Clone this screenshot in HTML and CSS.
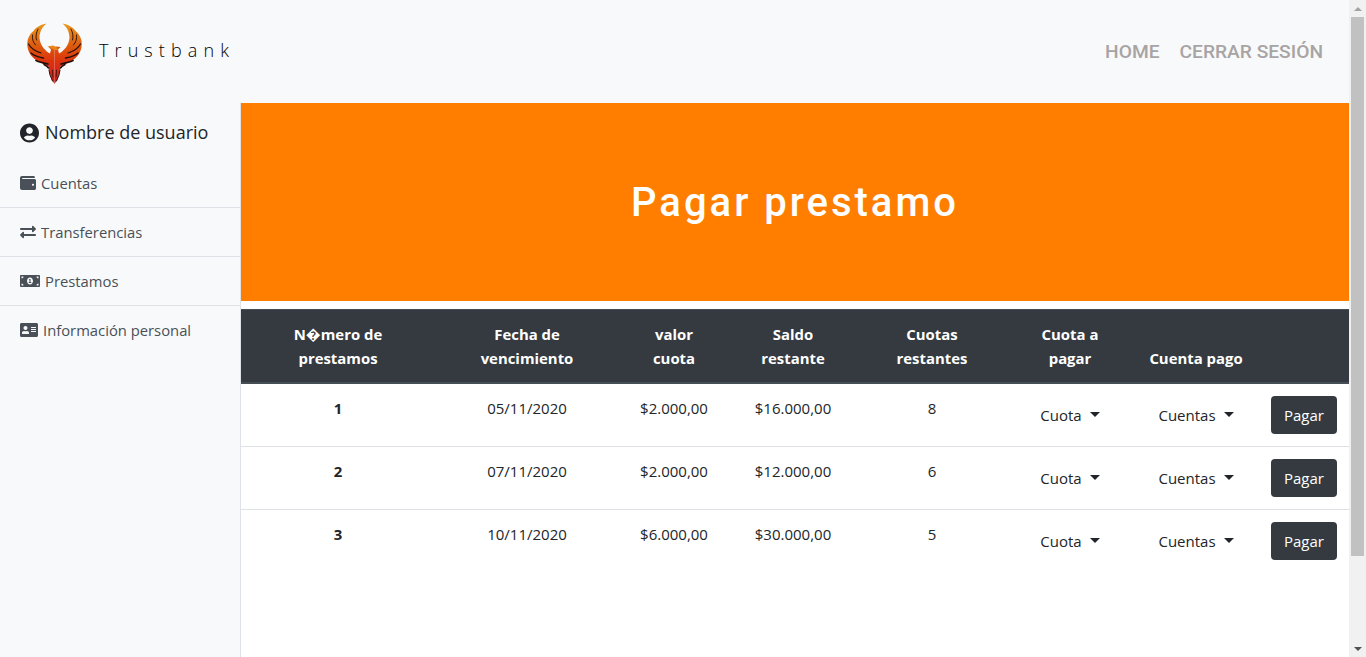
FILE: index.html
```html
<!DOCTYPE html>
<html lang="es">
<head>
<meta charset="utf-8">
<title>Trustbank</title>
<link rel="stylesheet" href="styles.css">
</head>
<body>
<div class="window">
  <div class="app">
    <header class="topbar">
      <a class="brand">
        <svg class="logo" viewBox="25 22 60 64" width="60" height="64" aria-hidden="true">
          <defs>
            <linearGradient id="fire" x1="0" y1="23" x2="0" y2="84" gradientUnits="userSpaceOnUse">
              <stop offset="0" stop-color="#ea9a20"/>
              <stop offset="0.35" stop-color="#de5f10"/>
              <stop offset="0.62" stop-color="#dc3410"/>
              <stop offset="1" stop-color="#d41818"/>
            </linearGradient>
            <filter id="soft" x="-10%" y="-10%" width="120%" height="120%"><feGaussianBlur stdDeviation="0.45"/></filter>
            <g id="half">
              <path fill="url(#fire)" d="M46.500 23.500C41 24.500 36 27 33.500 31C28.500 35 26.500 41 27.500 47C28.500 53 32 58 38 61C42 63.500 46 64.500 48.500 66.500L50 74L52 80L54.500 84L54.500 48L53 46.500L48.500 47L51 49.500L50 53.500C45 51 40 45 39.500 38C39.500 32 42 27 46.500 23.500Z"/>
              <g fill="none" stroke="#241008" stroke-linecap="round">
                <path stroke-width="0.900" d="M38 29C36 33 35.500 37 36.500 40"/>
                <path stroke-width="0.900" d="M32.500 35C32 39 33 42 35.500 45"/>
                <path stroke-width="1.200" d="M28.500 44C30.500 48 35 51 41 53"/>
                <path stroke-width="1.400" d="M31 53C34 56 38 57 43.500 58"/>
                <path stroke-width="1.700" d="M36 60.500C39 62 43 63 48 64"/>
                <path stroke-width="1.500" d="M44 64.500C46 65.500 47.500 66.500 48.500 68"/>
                <path stroke-width="1" d="M49 70L50 75L52.500 81"/>
                <path stroke-width="0.700" d="M52.400 70L52.900 77"/>
              </g>
            </g>
          </defs>
          <g filter="url(#soft)">
            <use href="#half"/>
            <use href="#half" transform="translate(109 0) scale(-1 1)"/>
            <path fill="#e8861a" d="M47.500 46.500L53 45.500L56.500 47L58 50L54.500 50Z"/>
          </g>
        </svg>
        <span class="brand-name">Trustbank</span>
      </a>
      <nav class="topnav">
        <a>HOME</a>
        <a>CERRAR SESIÓN</a>
      </nav>
    </header>
    <div class="layout">
      <aside class="sidebar">
        <div class="user">
          <svg class="user-icon" viewBox="0 0 496 512" aria-hidden="true"><path d="M248 8C111 8 0 119 0 256s111 248 248 248 248-111 248-248S385 8 248 8zm0 96c48.600 0 88 39.400 88 88s-39.400 88-88 88-88-39.400-88-88 39.400-88 88-88zm0 344c-58.700 0-111.300-26.600-146.500-68.200 18.800-35.400 55.600-59.800 98.500-59.800 2.400 0 4.800.4 7.100 1.100 13 4.200 26.600 6.900 40.900 6.900 14.300 0 28-2.700 40.900-6.900 2.300-.7 4.700-1.100 7.100-1.100 42.900 0 79.700 24.400 98.500 59.800C359.300 421.400 306.700 448 248 448z"/></svg>
          <span>Nombre de usuario</span>
        </div>
        <ul class="menu">
          <li>
            <svg class="icon w16" viewBox="0 0 512 512" aria-hidden="true"><path d="M461.200 128H80c-8.840 0-16-7.160-16-16s7.160-16 16-16h384c8.840 0 16-7.160 16-16 0-26.510-21.490-48-48-48H64C28.650 32 0 60.650 0 96v320c0 35.350 28.650 64 64 64h397.200c28.020 0 50.800-21.530 50.800-48V176c0-26.470-22.780-48-50.800-48zM416 340c-17.670 0-32-14.330-32-32s14.330-32 32-32 32 14.330 32 32-14.330 32-32 32z"/></svg>
            <span>Cuentas</span>
          </li>
          <li>
            <svg class="icon w16" viewBox="0 0 512 512" aria-hidden="true"><path d="M0 168v-16c0-13.255 10.745-24 24-24h360V80c0-21.367 25.899-32.042 40.971-16.971l80 80c9.372 9.373 9.372 24.569 0 33.941l-80 80C409.956 271.982 384 261.456 384 240v-48H24c-13.255 0-24-10.745-24-24zm488 152H128v-48c0-21.314-25.862-32.080-40.971-16.971l-80 80c-9.372 9.373-9.372 24.569 0 33.941l80 80C102.057 463.997 128 453.437 128 432v-48h360c13.255 0 24-10.745 24-24v-16c0-13.255-10.745-24-24-24z"/></svg>
            <span>Transferencias</span>
          </li>
          <li>
            <svg class="icon w20" viewBox="0 0 640 512" aria-hidden="true"><path d="M352 288h-16v-88c0-4.420-3.580-8-8-8h-13.580c-4.740 0-9.370 1.400-13.310 4.030l-15.330 10.220a7.994 7.994 0 0 0-2.220 11.090l8.880 13.310a7.994 7.994 0 0 0 11.090 2.220l.47-.31V288h-16c-4.420 0-8 3.580-8 8v16c0 4.420 3.580 8 8 8h64c4.420 0 8-3.580 8-8v-16c0-4.420-3.580-8-8-8zM608 64H32C14.330 64 0 78.330 0 96v320c0 17.670 14.330 32 32 32h576c17.670 0 32-14.330 32-32V96c0-17.670-14.330-32-32-32zM48 400v-64c35.350 0 64 28.650 64 64H48zm0-224v-64h64c0 35.350-28.650 64-64 64zm272 192c-53.020 0-96-50.150-96-112 0-61.860 42.980-112 96-112s96 50.140 96 112c0 61.870-43 112-96 112zm272 32h-64c0-35.350 28.650-64 64-64v64zm0-224c-35.350 0-64-28.650-64-64h64v64z"/></svg>
            <span>Prestamos</span>
          </li>
          <li>
            <svg class="icon w18" viewBox="0 0 576 512" aria-hidden="true"><path d="M528 32H48C21.500 32 0 53.500 0 80v352c0 26.500 21.500 48 48 48h480c26.500 0 48-21.500 48-48V80c0-26.500-21.500-48-48-48zm-352 96c35.300 0 64 28.700 64 64s-28.700 64-64 64-64-28.700-64-64 28.700-64 64-64zm112 236.800c0 10.600-10 19.200-22.400 19.200H86.400C74 384 64 375.400 64 364.800v-19.200c0-31.800 30.100-57.600 67.200-57.600h5c12.300 5.100 25.700 8 39.800 8s27.600-2.900 39.800-8h5c37.100 0 67.200 25.800 67.200 57.600v19.200zM512 312c0 4.400-3.600 8-8 8H360c-4.400 0-8-3.600-8-8v-16c0-4.400 3.600-8 8-8h144c4.400 0 8 3.600 8 8v16zm0-64c0 4.400-3.600 8-8 8H360c-4.400 0-8-3.600-8-8v-16c0-4.400 3.600-8 8-8h144c4.400 0 8 3.600 8 8v16zm0-64c0 4.400-3.600 8-8 8H360c-4.400 0-8-3.600-8-8v-16c0-4.400 3.600-8 8-8h144c4.400 0 8 3.600 8 8v16z"/></svg>
            <span>Información personal</span>
          </li>
        </ul>
      </aside>
      <main class="content">
        <section class="banner"><h1>Pagar prestamo</h1></section>
        <table class="loans">
          <colgroup>
            <col class="c1"><col class="c2"><col class="c3"><col class="c4"><col class="c5"><col class="c6"><col class="c7"><col class="c8">
          </colgroup>
          <thead>
            <tr>
              <th>N�mero de<br>prestamos</th>
              <th>Fecha de<br>vencimiento</th>
              <th>valor<br>cuota</th>
              <th>Saldo<br>restante</th>
              <th>Cuotas<br>restantes</th>
              <th>Cuota a<br>pagar</th>
              <th>Cuenta pago</th>
              <th></th>
            </tr>
          </thead>
          <tbody>
            <tr>
              <th>1</th><td>05/11/2020</td><td>$2.000,00</td><td>$16.000,00</td><td>8</td>
              <td><button class="drop">Cuota</button></td>
              <td><button class="drop">Cuentas</button></td>
              <td><button class="pay">Pagar</button></td>
            </tr>
            <tr>
              <th>2</th><td>07/11/2020</td><td>$2.000,00</td><td>$12.000,00</td><td>6</td>
              <td><button class="drop">Cuota</button></td>
              <td><button class="drop">Cuentas</button></td>
              <td><button class="pay">Pagar</button></td>
            </tr>
            <tr>
              <th>3</th><td>10/11/2020</td><td>$6.000,00</td><td>$30.000,00</td><td>5</td>
              <td><button class="drop">Cuota</button></td>
              <td><button class="drop">Cuentas</button></td>
              <td><button class="pay">Pagar</button></td>
            </tr>
          </tbody>
        </table>
      </main>
    </div>
  </div>
  <div class="scrollbar" aria-hidden="true">
    <div class="arrow up"></div>
    <div class="thumb"></div>
    <div class="arrow down"></div>
  </div>
</div>
</body>
</html>
```

FILE: styles.css
```css
* { box-sizing: border-box; }
html, body { margin: 0; height: 100%; overflow: hidden; }
body {
  font-family: "Open Sans", "Noto Sans", sans-serif;
  font-size: 15px;
  line-height: 24px;
  color: #212529;
  background: #fff;
}
.window { display: flex; height: 657px; }
.app { flex: 1; min-width: 0; display: flex; flex-direction: column; }

.topbar {
  height: 103px;
  flex: none;
  display: flex;
  align-items: center;
  justify-content: space-between;
  background: #f8f9fa;
  padding: 0 26px 0 25px;
}
.brand { display: flex; align-items: center; }
.logo { display: block; margin-top: 5px; }
.brand-name {
  margin-left: 14px;
  margin-bottom: 4px;
  font-weight: 300;
  font-size: 18px;
  letter-spacing: 6.1px;
  color: #000;
}
.topnav {
  display: flex;
  gap: 20px;
  font-family: Roboto, sans-serif;
  font-weight: 500;
  font-size: 19.2px;
  color: #a8a4a4;
}

.layout { flex: 1; display: flex; min-height: 0; }
.sidebar {
  width: 241px;
  flex: none;
  background: #f8f9fa;
  border-right: 1px solid #dee2e6;
}
.user {
  height: 56px;
  padding: 17px 0 0 20px;
  display: flex;
  align-items: flex-start;
  font-size: 18px;
  color: #212529;
}
.user-icon { width: 19px; height: 20px; margin: 3px 6px 0 0; fill: #212529; }
.menu { list-style: none; margin: 0; padding: 0; }
.menu li {
  height: 49px;
  display: flex;
  align-items: center;
  padding: 0 0 0 20px;
  border-bottom: 1px solid #dee2e6;
  color: #495057;
  font-size: 14.8px;
}
.menu li:last-child { border-bottom-color: transparent; }
.icon { height: 16px; fill: #495057; flex: none; margin-right: 5px; }
.w16 { width: 16px; }
.w18 { width: 18px; }
.w20 { width: 20px; }

.content { flex: 1; min-width: 0; background: #fff; }
.banner {
  height: 198px;
  margin-bottom: 8px;
  background: #ff7e00;
  display: flex;
  align-items: center;
  justify-content: center;
}
.banner h1 {
  margin: 2px 0 0;
  font-family: Roboto, sans-serif;
  font-weight: 500;
  font-size: 40px;
  line-height: 48px;
  letter-spacing: 3px;
  color: #fff;
}

.loans {
  width: 100%;
  table-layout: fixed;
  border-collapse: collapse;
  text-align: center;
}
.c1 { width: 194px; }
.c2 { width: 184px; }
.c3 { width: 110px; }
.c4 { width: 128px; }
.c5 { width: 150px; }
.c6 { width: 126px; }
.c7 { width: 126px; }
.c8 { width: 90px; }
.loans th, .loans td {
  padding: 12px;
  vertical-align: top;
  border-top: 1px solid #dee2e6;
}
.loans thead th {
  vertical-align: bottom;
  background: #343a40;
  color: #fff;
  border-top-color: #454d55;
  border-bottom: 2px solid #454d55;
  font-size: 14.9px;
  font-weight: 700;
}
.loans tbody tr:first-child th, .loans tbody tr:first-child td { border-top: 0; }
.loans tbody th { font-size: 14.9px; font-weight: 700; }

button { font: inherit; }
.drop {
  height: 38px;
  padding: 0;
  border: 0;
  background: transparent;
  color: #212529;
  display: inline-flex;
  align-items: center;
}
.drop::after {
  content: "";
  margin-left: 8px;
  margin-top: -2px;
  border-top: 5px solid #212529;
  border-left: 5px solid transparent;
  border-right: 5px solid transparent;
}
.pay {
  width: 66px;
  height: 38px;
  padding: 0;
  border: 0;
  border-radius: 4px;
  background: #343a40;
  color: #fff;
}

.scrollbar {
  width: 17px;
  flex: none;
  background: #f1f1f1;
  display: flex;
  flex-direction: column;
  align-items: center;
}
.arrow { height: 17px; flex: none; width: 13px; display: flex; align-items: center; justify-content: center; }
.arrow::before { content: ""; border-left: 4px solid transparent; border-right: 4px solid transparent; }
.up::before { border-bottom: 4px solid #a3a3a3; }
.down { margin-top: auto; }
.down::before { border-top: 4px solid #505050; }
.thumb { width: 13px; height: 539px; background: #c1c1c1; }
```
